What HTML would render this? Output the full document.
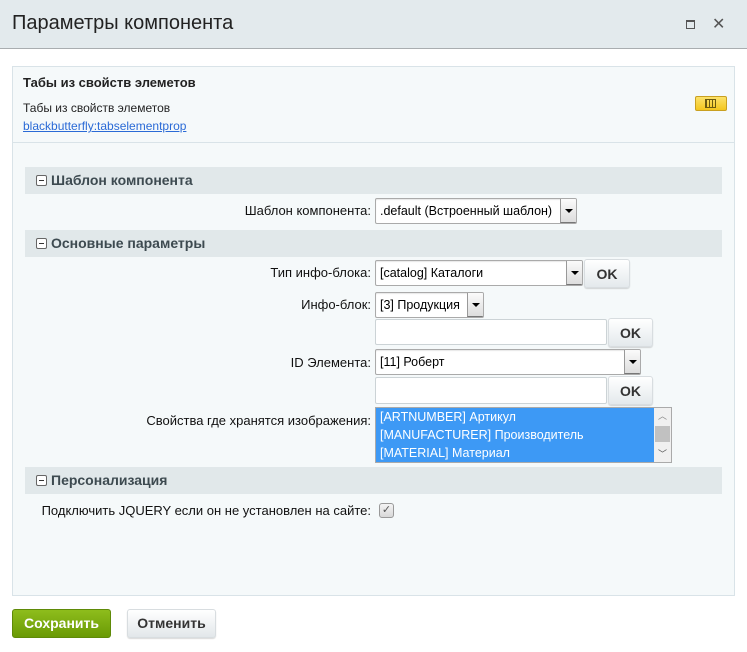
<!DOCTYPE html>
<html><head><meta charset="utf-8">
<style>
*{box-sizing:border-box;margin:0;padding:0}
body{width:747px;height:652px;background:#fff;font-family:"Liberation Sans",Arial,sans-serif;font-size:13px;color:#000;position:relative;overflow:hidden}
.a{position:absolute}
.hdr{left:0;top:0;width:747px;height:49px;background:#e3eaed;border-bottom:1px solid #a9adb0}
.panel{left:12px;top:66px;width:723px;height:530px;background:#f5f9fa;border:1px solid #d9e3e8}
.bar{left:25px;width:697px;height:27px;background:#e1e8ea;font-weight:bold;font-size:14px;color:#3d4a50;line-height:27px;padding-left:26px}
.bar i{position:absolute;left:11px;top:8px;width:11px;height:11px;border:1px solid #666;border-radius:2px;background:#fff}
.bar i:after{content:"";position:absolute;left:2px;top:4px;width:5px;height:1px;background:#333}
.lbl{right:376px;text-align:right;white-space:nowrap;font-size:13px;color:#111}
.sel{background:#fff;border:1px solid #aaa;border-radius:2px;font-size:12.5px;padding-left:4px;line-height:24px;white-space:nowrap;overflow:hidden;box-shadow:inset 0 1px 1px rgba(0,0,0,.1)}
.sel b{position:absolute;right:0;top:0;width:16px;height:100%;background:linear-gradient(#fbfbfb,#ddd);border-left:1px solid #999;border-bottom:1px solid #777}
.sel b:after{content:"";position:absolute;left:4px;top:10px;border-left:4px solid transparent;border-right:4px solid transparent;border-top:4px solid #000}
.inp{background:#fff;border:1px solid #ccd3d6;border-radius:2px}
.ok{background:linear-gradient(#fff,#e4e9ec);border:1px solid #d8dde0;border-radius:3px;font-weight:bold;font-size:14px;color:#333;text-align:center;box-shadow:0 1px 1px rgba(0,0,0,.15)}
</style></head><body>
<div class="a hdr"></div>
<div class="a" style="left:12px;top:12px;font-size:20px;color:#222">Параметры компонента</div>
<div class="a" style="left:686px;top:20px;width:9px;height:9px;border:1px solid #555;border-top-width:2px"></div>
<div class="a" style="left:712px;top:14px;font-size:16px;color:#555">✕</div>

<div class="a panel"></div>
<div class="a" style="left:12px;top:142px;width:723px;height:1px;background:#d9e3e8"></div>
<div class="a" style="left:23px;top:75px;font-weight:bold;font-size:13px;color:#222">Табы из свойств элеметов</div>
<div class="a" style="left:23px;top:101px;font-size:12px;color:#222">Табы из свойств элеметов</div>
<div class="a" style="left:23px;top:119px;font-size:12px;color:#2a6ad6;text-decoration:underline">blackbutterfly:tabselementprop</div>
<div class="a" style="left:695px;top:96px;width:32px;height:15px;background:linear-gradient(#fce26a,#f4c61e);border:1px solid #c9a020;border-radius:2px"></div>
<div class="a" style="left:705px;top:99px;width:11px;height:9px;border:1px solid #6b5a10;background:repeating-linear-gradient(90deg,#6b5a10 0 1px,transparent 1px 3px)"></div>

<div class="a bar" style="top:167px"><i></i>Шаблон компонента</div>
<div class="a lbl" style="top:203px">Шаблон компонента:</div>
<div class="a sel" style="left:375px;top:198px;width:202px;height:26px">.default (Встроенный шаблон)<b></b></div>

<div class="a bar" style="top:230px"><i></i>Основные параметры</div>
<div class="a lbl" style="top:265px">Тип инфо-блока:</div>
<div class="a sel" style="left:375px;top:260px;width:208px;height:26px">[catalog] Каталоги<b></b></div>
<div class="a ok" style="left:584px;top:259px;width:46px;height:29px;line-height:28px">OK</div>

<div class="a lbl" style="top:297px">Инфо-блок:</div>
<div class="a sel" style="left:375px;top:292px;width:109px;height:26px">[3] Продукция<b></b></div>
<div class="a inp" style="left:375px;top:319px;width:232px;height:26px"></div>
<div class="a ok" style="left:608px;top:318px;width:45px;height:29px;line-height:28px">OK</div>

<div class="a lbl" style="top:355px">ID Элемента:</div>
<div class="a sel" style="left:375px;top:349px;width:266px;height:26px">[11] Роберт<b></b></div>
<div class="a inp" style="left:375px;top:377px;width:232px;height:27px"></div>
<div class="a ok" style="left:608px;top:376px;width:45px;height:29px;line-height:28px">OK</div>

<div class="a lbl" style="top:413px">Свойства где хранятся изображения:</div>
<div class="a" style="left:375px;top:407px;width:297px;height:56px;background:#3d99f5;border:1px solid #aaa;color:#fff;font-size:12.5px;line-height:18px;padding-left:4px">[ARTNUMBER] Артикул<br>[MANUFACTURER] Производитель<br>[MATERIAL] Материал</div>
<div class="a" style="left:654px;top:408px;width:17px;height:54px;background:#f0f0f0"></div>
<div class="a" style="left:655px;top:426px;width:15px;height:16px;background:#c1c1c1"></div>
<div class="a" style="left:658px;top:409px;font-size:9px;color:#888">︿</div>
<div class="a" style="left:658px;top:447px;font-size:9px;color:#555">﹀</div>

<div class="a bar" style="top:467px"><i></i>Персонализация</div>
<div class="a lbl" style="top:503px">Подключить JQUERY если он не установлен на сайте:</div>
<div class="a" style="left:379px;top:503px;width:15px;height:15px;border:1px solid #999;border-radius:3px;background:linear-gradient(#f4f4f4,#d8d8d8);font-size:11px;line-height:13px;text-align:center;color:#555">✓</div>

<div class="a" style="left:12px;top:609px;width:99px;height:29px;background:linear-gradient(#8ebd1c,#6a9a05);border:1px solid #5f8a08;border-radius:3px;color:#fff;font-weight:bold;font-size:14px;text-align:center;line-height:27px">Сохранить</div>
<div class="a" style="left:127px;top:609px;width:89px;height:29px;background:linear-gradient(#fff,#e2e7ea);border:1px solid #d8dde0;border-radius:3px;color:#333;font-weight:bold;font-size:14px;text-align:center;line-height:27px;box-shadow:0 1px 1px rgba(0,0,0,.15)">Отменить</div>
</body></html>
